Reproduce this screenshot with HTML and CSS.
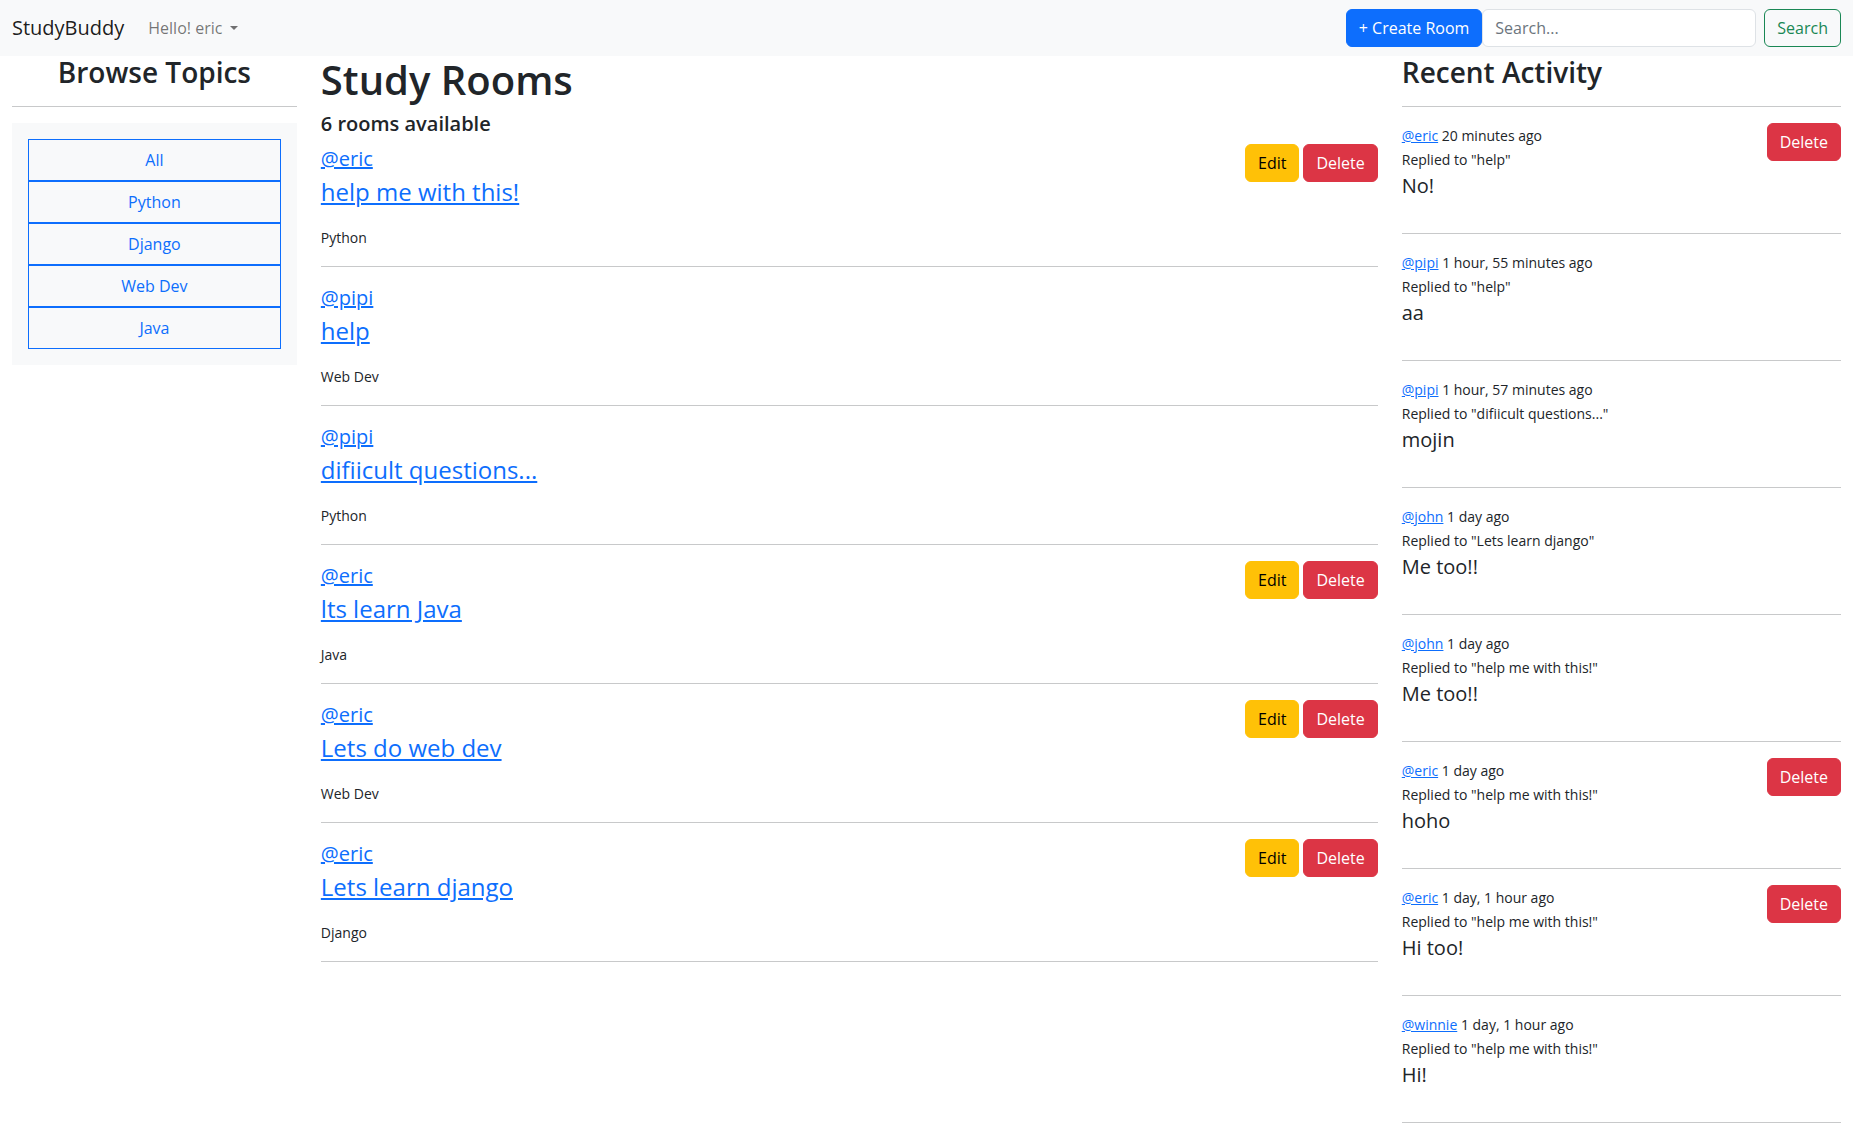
FILE: index.html
```html
<!DOCTYPE html>
<html lang="en">
<head>
<meta charset="utf-8">
<title>StudyBuddy</title>
<link rel="stylesheet" href="styles.css">
</head>
<body>
<nav class="navbar">
  <a class="brand" href="#">StudyBuddy</a>
  <a class="nav-link dropdown-toggle" href="#">Hello! eric</a>
  <div class="nav-right">
    <a class="btn btn-primary" href="#">+ Create Room</a>
    <input class="search-input" type="text" placeholder="Search...">
    <button class="btn btn-outline-success">Search</button>
  </div>
</nav>

<div class="layout">
  <aside class="col col-topics">
    <h3 class="col-title center">Browse Topics</h3>
    <hr>
    <div class="topics-box">
      <a class="topic-btn" href="#">All</a>
      <a class="topic-btn" href="#">Python</a>
      <a class="topic-btn" href="#">Django</a>
      <a class="topic-btn" href="#">Web Dev</a>
      <a class="topic-btn" href="#">Java</a>
    </div>
  </aside>

  <main class="col col-rooms">
    <h1 class="page-title">Study Rooms</h1>
    <h5 class="room-count">6 rooms available</h5>

    <div class="room">
      <div class="room-actions"><a class="btn btn-warning" href="#">Edit</a><a class="btn btn-danger" href="#">Delete</a></div>
      <div class="room-host"><a href="#">@eric</a></div>
      <div class="room-title"><a href="#">help me with this!</a></div>
      <small class="room-topic">Python</small>
    </div>
    <hr>
    <div class="room">
      <div class="room-host"><a href="#">@pipi</a></div>
      <div class="room-title"><a href="#">help</a></div>
      <small class="room-topic">Web Dev</small>
    </div>
    <hr>
    <div class="room">
      <div class="room-host"><a href="#">@pipi</a></div>
      <div class="room-title"><a href="#">difiicult questions...</a></div>
      <small class="room-topic">Python</small>
    </div>
    <hr>
    <div class="room">
      <div class="room-actions"><a class="btn btn-warning" href="#">Edit</a><a class="btn btn-danger" href="#">Delete</a></div>
      <div class="room-host"><a href="#">@eric</a></div>
      <div class="room-title"><a href="#">lts learn Java</a></div>
      <small class="room-topic">Java</small>
    </div>
    <hr>
    <div class="room">
      <div class="room-actions"><a class="btn btn-warning" href="#">Edit</a><a class="btn btn-danger" href="#">Delete</a></div>
      <div class="room-host"><a href="#">@eric</a></div>
      <div class="room-title"><a href="#">Lets do web dev</a></div>
      <small class="room-topic">Web Dev</small>
    </div>
    <hr>
    <div class="room">
      <div class="room-actions"><a class="btn btn-warning" href="#">Edit</a><a class="btn btn-danger" href="#">Delete</a></div>
      <div class="room-host"><a href="#">@eric</a></div>
      <div class="room-title"><a href="#">Lets learn django</a></div>
      <small class="room-topic">Django</small>
    </div>
    <hr>
  </main>

  <aside class="col col-activity">
    <h3 class="col-title">Recent Activity</h3>
    <hr>
    <div class="activity">
      <a class="btn btn-danger act-delete" href="#">Delete</a>
      <div class="act-line"><small><a href="#">@eric</a> 20 minutes ago</small></div>
      <div class="act-line"><small>Replied to "help"</small></div>
      <p class="act-body">No!</p>
    </div>
    <hr>
    <div class="activity">
      <div class="act-line"><small><a href="#">@pipi</a> 1 hour, 55 minutes ago</small></div>
      <div class="act-line"><small>Replied to "help"</small></div>
      <p class="act-body">aa</p>
    </div>
    <hr>
    <div class="activity">
      <div class="act-line"><small><a href="#">@pipi</a> 1 hour, 57 minutes ago</small></div>
      <div class="act-line"><small>Replied to "difiicult questions..."</small></div>
      <p class="act-body">mojin</p>
    </div>
    <hr>
    <div class="activity">
      <div class="act-line"><small><a href="#">@john</a> 1 day ago</small></div>
      <div class="act-line"><small>Replied to "Lets learn django"</small></div>
      <p class="act-body">Me too!!</p>
    </div>
    <hr>
    <div class="activity">
      <div class="act-line"><small><a href="#">@john</a> 1 day ago</small></div>
      <div class="act-line"><small>Replied to "help me with this!"</small></div>
      <p class="act-body">Me too!!</p>
    </div>
    <hr>
    <div class="activity">
      <a class="btn btn-danger act-delete" href="#">Delete</a>
      <div class="act-line"><small><a href="#">@eric</a> 1 day ago</small></div>
      <div class="act-line"><small>Replied to "help me with this!"</small></div>
      <p class="act-body">hoho</p>
    </div>
    <hr>
    <div class="activity">
      <a class="btn btn-danger act-delete" href="#">Delete</a>
      <div class="act-line"><small><a href="#">@eric</a> 1 day, 1 hour ago</small></div>
      <div class="act-line"><small>Replied to "help me with this!"</small></div>
      <p class="act-body">Hi too!</p>
    </div>
    <hr>
    <div class="activity">
      <div class="act-line"><small><a href="#">@winnie</a> 1 day, 1 hour ago</small></div>
      <div class="act-line"><small>Replied to "help me with this!"</small></div>
      <p class="act-body">Hi!</p>
    </div>
    <hr>
  </aside>
</div>
</body>
</html>
```

FILE: styles.css
```css
* {
  box-sizing: border-box;
}

body {
  margin: 0;
  font-family: "Open Sans", "Noto Sans", sans-serif;
  font-size: 16px;
  line-height: 1.5;
  color: #212529;
  background: #fff;
}

a {
  color: #0d6efd;
  text-decoration: underline;
}

hr {
  height: 0;
  border: 0;
  border-top: 1px solid #c8c9ca;
  margin: 16px 0;
}

/* Navbar */
.navbar {
  display: flex;
  align-items: center;
  height: 56px;
  padding: 0 12px;
  background: #f8f9fa;
}

.brand {
  font-size: 20px;
  line-height: 30px;
  color: rgba(0, 0, 0, 0.9);
  text-decoration: none;
  margin-right: 16px;
}

.nav-link {
  padding: 8px;
  color: rgba(0, 0, 0, 0.55);
  text-decoration: none;
}

.dropdown-toggle::after {
  content: "";
  display: inline-block;
  margin-left: 8px;
  vertical-align: 0.255em;
  border-top: 0.3em solid;
  border-right: 0.3em solid transparent;
  border-left: 0.3em solid transparent;
  border-bottom: 0;
}

.nav-right {
  margin-left: auto;
  display: flex;
  align-items: center;
}

.btn {
  display: inline-block;
  padding: 6px 12px;
  font-family: inherit;
  font-size: 16px;
  line-height: 24px;
  border: 1px solid transparent;
  border-radius: 6px;
  text-decoration: none;
  text-align: center;
  cursor: pointer;
  background: transparent;
}

.btn-primary {
  background: #0d6efd;
  border-color: #0d6efd;
  color: #fff;
}

.btn-outline-success {
  color: #198754;
  border-color: #198754;
  margin-left: 8px;
}

.btn-warning {
  background: #ffc107;
  border-color: #ffc107;
  color: #000;
}

.btn-danger {
  background: #dc3545;
  border-color: #dc3545;
  color: #fff;
}

.search-input {
  width: 274px;
  height: 38px;
  padding: 6px 12px;
  font-family: inherit;
  font-size: 16px;
  line-height: 24px;
  color: #212529;
  background: #fff;
  border: 1px solid #dee2e6;
  border-radius: 6px;
  outline: none;
}

.search-input::placeholder {
  color: #6c757d;
}

/* Layout */
.layout {
  display: grid;
  grid-template-columns: 2fr 7fr 3fr;
}

.col {
  padding: 0 12px;
  min-width: 0;
}

.col-title {
  font-size: 28px;
  font-weight: 600;
  line-height: 1.2;
  margin: 0 0 8px;
}

.center {
  text-align: center;
}

/* Topics */
.topics-box {
  background: #f8f9fa;
  padding: 16px;
  display: flex;
  flex-direction: column;
}

.topic-btn {
  display: block;
  padding: 8px 12px;
  line-height: 24px;
  border: 1px solid #0d6efd;
  color: #0d6efd;
  text-align: center;
  text-decoration: none;
}

/* Rooms */
.page-title {
  font-size: 40px;
  font-weight: 600;
  line-height: 1.2;
  margin: 0 0 8px;
}

.room-count {
  font-size: 20px;
  font-weight: 600;
  line-height: 1.2;
  margin: 0 0 8px;
}

.room-actions {
  float: right;
  display: flex;
  gap: 4px;
}

.room-host {
  font-size: 20px;
  line-height: 30px;
}

.room-title {
  font-size: 24px;
  line-height: 36px;
  margin-bottom: 16px;
}

.room-topic {
  display: block;
  font-size: 14px;
  line-height: 24px;
}

/* Activity */
.activity {
  display: flow-root;
}

.act-delete {
  float: right;
}

.act-line {
  line-height: 24px;
}

.act-line small {
  font-size: 14px;
  line-height: 1;
}

.act-body {
  font-size: 20px;
  line-height: 30px;
  margin: 0 0 16px;
}
```
